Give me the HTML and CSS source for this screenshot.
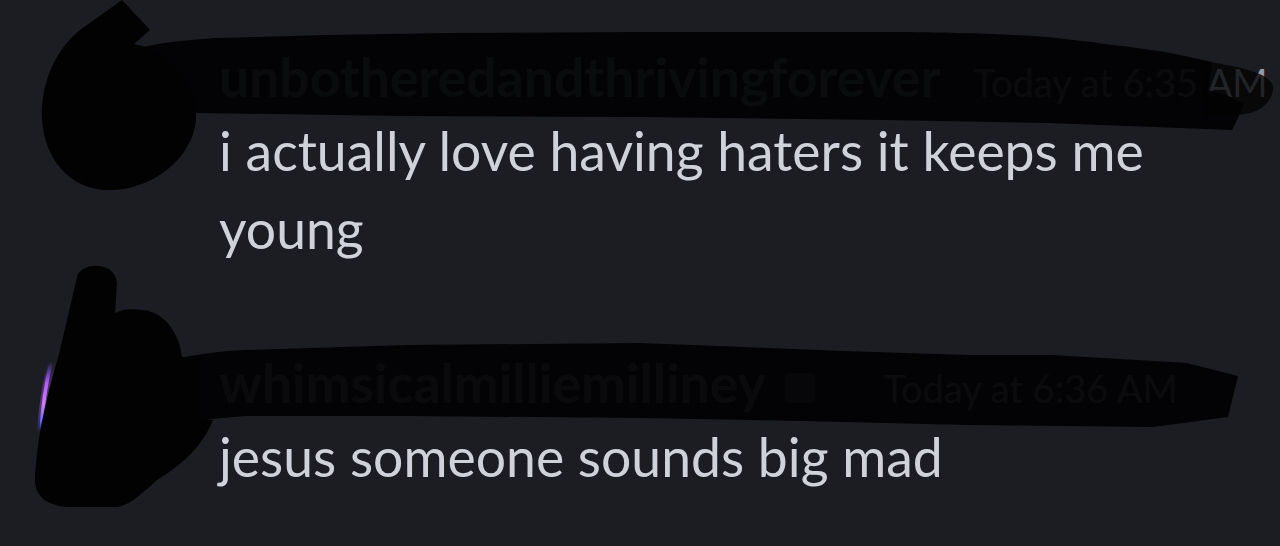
FILE: index.html
```html
<!DOCTYPE html>
<html lang="en">
<head>
    <meta charset="UTF-8">
    <meta name="viewport" content="width=device-width, initial-scale=1.0">
    <title>Chat</title>
    <link rel="stylesheet" href="styles.css">
</head>
<body>
    <div class="chat">
        <div class="message">
            <div class="avatar"></div>
            <div class="msg-body">
                <div class="header">
                    <span class="name">unbotheredandthrivingforever</span>
                    <span class="time time-1">Today at 6:35 AM</span>
                </div>
                <div class="content">i actually love having haters it keeps me young</div>
            </div>
        </div>

        <div class="message">
            <div class="avatar avatar-purple"></div>
            <div class="msg-body">
                <div class="header">
                    <span class="name name-2">whimsicalmilliemilliney</span>
                    <span class="badge"></span>
                    <span class="time time-2">Today at 6:36 AM</span>
                </div>
                <div class="content">jesus someone sounds big mad</div>
            </div>
        </div>
    </div>

    <!-- scribbled-over names and avatars -->
    <svg class="redact" width="1280" height="546" viewBox="0 0 1280 546">
        <defs>
            <linearGradient id="glow" x1="0" y1="0" x2="0" y2="1">
                <stop offset="0" stop-color="#7d4dff" stop-opacity="0"/>
                <stop offset="0.3" stop-color="#b35cff"/>
                <stop offset="0.6" stop-color="#d27bff"/>
                <stop offset="0.85" stop-color="#6b62ff"/>
                <stop offset="1" stop-color="#4a55ff" stop-opacity="0"/>
            </linearGradient>
        </defs>

        <!-- message 1 -->
        <path class="ink-soft" d="M1200 60 L1232 66 C1262 72 1275 80 1273 90 C1271 102 1262 110 1250 113 L1234 116 L1205 116 Z"/>
        <path class="ink" d="M140 48 C160 42 190 40 216 38 L327 35 L449 33 L640 32 L909 32 C980 33 1020 35 1048 37 C1100 43 1140 48 1171 53 L1212 62 L1208 90 L1228 96 L1244 104 L1238 118 L1232 130 L1154 127 L1048 123 L885 120 L640 117 L400 116 L196 113 L140 110 Z"/>
        <path class="ink-solid" d="M80 30 L122 0 L150 30 L134 44 C170 50 197 85 196 120 C192 160 150 192 105 190 C70 188 45 160 42 120 C40 85 55 50 80 30 Z"/>

        <!-- message 2 -->
        <path d="M52 362 Q43 396 41 432" fill="none" stroke="url(#glow)" stroke-width="8" stroke-opacity="0.3" stroke-linecap="round"/>
        <path d="M51 362 Q43 396 41 432" fill="none" stroke="url(#glow)" stroke-width="3.5" stroke-linecap="round"/>
        <path class="ink" d="M180 358 C200 354 220 351 245 350 L408 345 L640 343 L844 351 L967 355 L1053 355 L1187 363 L1238 376 L1228 417 L1153 427 L967 425 L803 421 L640 418 L408 416 L245 416 L200 420 Z"/>
        <path class="ink-solid" d="M77 277 C80 262 115 260 117 283 L115 313 C125 308 135 309 143 310 C165 312 180 335 182 357 L200 360 L200 418 L213 420 C205 440 190 460 157 480 C140 495 130 505 117 507 L67 507 C45 505 35 495 35 480 C36 455 40 430 43 417 C48 390 55 370 60 350 Z"/>
    </svg>
</body>
</html>
```

FILE: styles.css
```css
body {
    margin: 0;
    height: 546px;
    overflow: hidden;
    position: relative;
    background: #1c1d23;
    font-family: Lato, "Liberation Sans", sans-serif;
}
.chat {
    padding: 41px 16px 0 50px;
}
.message {
    display: flex;
    gap: 39px;
}
.message + .message {
    margin-top: 80px;
}
.avatar {
    width: 130px;
    height: 130px;
    border-radius: 50%;
    background: #24252c;
    flex-shrink: 0;
    margin-top: 6px;
}
.avatar-purple {
    box-shadow: 0 0 0 6px #6d4bd6;
}
.msg-body {
    flex: 1;
    min-width: 0;
}
.header {
    font-size: 53.5px;
    line-height: 70px;
    white-space: nowrap;
}
.name {
    color: #8e9098;
    font-weight: 700;
}
.name-2 {
    color: #8a82a4;
}
.badge {
    display: inline-block;
    width: 30px;
    height: 30px;
    margin-left: 6px;
    border-radius: 6px;
    background: #5e5878;
}
.time {
    font-size: 38px;
    line-height: 1;
    color: #949ba4;
    margin-left: 14px;
}
.time-1 {
    margin-left: 19px;
}
.time-2 {
    margin-left: 54px;
}
.content {
    font-size: 53.5px;
    line-height: 78px;
    color: #d0d2da;
}
.redact {
    position: absolute;
    top: 0;
    left: 0;
    pointer-events: none;
}
.ink {
    fill: #020203;
    fill-opacity: 0.94;
}
.ink-soft {
    fill: #020203;
    fill-opacity: 0.78;
}
.ink-solid {
    fill: #020203;
}
```
